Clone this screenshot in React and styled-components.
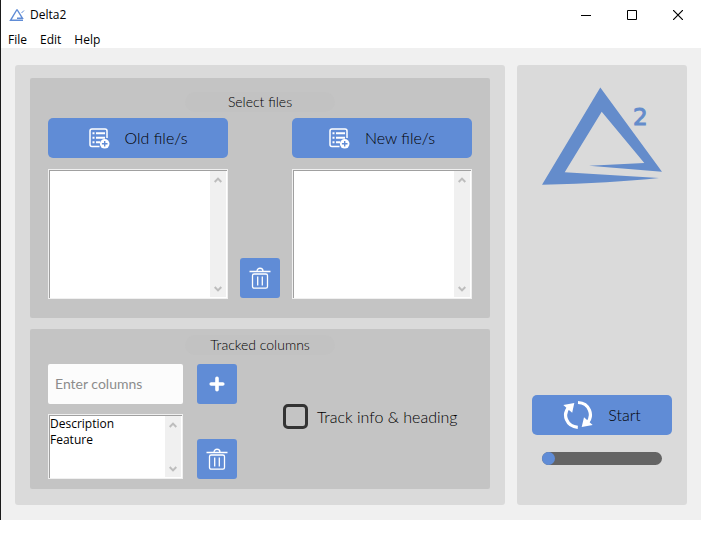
import React, { useState } from "react";
import styled, { createGlobalStyle } from "styled-components";

const blue = "#608cd6";
const gothic = '"Lato", sans-serif';
const system = '"Open Sans", "Noto Sans", sans-serif';

const GlobalStyle = createGlobalStyle`
  * { box-sizing: border-box; }
  body { margin: 0; background: #fff; color: #000; font: 12px/16px ${system}; }
  button { border: 0; padding: 0; color: inherit; cursor: pointer; }
  svg { display: block; flex: none; }
`;

const Window = styled.div`
  border-left: 1px solid #1a1a1a;
  background: #f0f0f0;
`;

const TitleBar = styled.header`
  display: flex;
  align-items: center;
  height: 30px;
  padding-left: 8px;
  background: #fff;
`;

const Title = styled.h1`
  flex: 1;
  margin: 0 0 0 4px;
  font: inherit;
`;

const WindowButton = styled.button`
  display: grid;
  place-items: center;
  width: 46px;
  height: 28px;
  background: none;
`;

const MenuBar = styled.nav`
  display: flex;
  gap: 13px;
  height: 18px;
  padding-left: 7px;
  background: #fff;
`;

const MenuItem = styled.button`
  height: 18px;
  background: none;
  font: 12px/20px ${system};
`;

const Content = styled.main`
  display: grid;
  grid-template-columns: minmax(0, 1fr) 170px;
  gap: 12px;
  padding: 17px 14px 15px;
`;

const Panel = styled.section`
  display: flex;
  flex-direction: column;
  gap: 11px;
  padding: 13px 15px 16px;
  border-radius: 3px;
  background: #dadada;
`;

const SidePanel = styled(Panel)`
  align-items: center;
  gap: 17px;
  padding: 6px 15px 40px;
`;

const Frame = styled.section`
  padding: ${(p) => (p.$compact ? "6px 18px 10px" : "14px 18px 19px")};
  border-radius: 2px;
  background: #c4c4c4;
`;

const Heading = styled.h2`
  width: 150px;
  margin: 0 auto;
  border-radius: 10px;
  background: #c2c2c2;
  font: 300 14px/20px ${gothic};
  text-align: center;
`;

const FileGrid = styled.div`
  display: grid;
  grid-template-columns: 180px 40px 180px;
  justify-content: center;
  gap: 11px 12px;
  margin-top: 6px;
`;

const ColumnGrid = styled.div`
  display: grid;
  grid-template-columns: 135px 40px minmax(0, 1fr);
  gap: 10px 14px;
  margin-top: 9px;
`;

const ActionButton = styled.button`
  display: flex;
  align-items: center;
  justify-content: center;
  gap: 15px;
  width: ${(p) => p.$width || "100%"};
  height: 40px;
  border-radius: 5px;
  background: ${blue};
  font: 300 16px/20px ${gothic};
`;

const IconButton = styled.button`
  display: grid;
  place-items: center;
  align-self: end;
  width: 40px;
  height: 40px;
  border-radius: 3px;
  background: ${blue};
`;

const FileTrash = styled(IconButton)`
  grid-column: 2;
  margin-bottom: 1px;
`;

const ListFrame = styled.div`
  display: flex;
  height: ${(p) => p.$height};
  border: 1px solid #f0f0f0;
  background: #fff;
  box-shadow: inset 1px 1px #a0a0a0, inset -1px -1px #fff;
`;

const List = styled.ul`
  flex: 1;
  margin: 0;
  padding: 1px;
  list-style: none;
`;

const ScrollTrack = styled.div`
  display: flex;
  flex-direction: column;
  justify-content: space-between;
  width: 16px;
  margin: 1px 1px 1px 0;
  background: #f0f0f0;
`;

const ScrollButton = styled.button`
  display: grid;
  place-items: center;
  height: 17px;
  background: none;
`;

const Entry = styled.input`
  width: 100%;
  height: 40px;
  padding: 0 7px 2px;
  border: 0;
  border-radius: 2px;
  background: #fcfcfc;
  font: 14px/20px ${gothic};
  &::placeholder { color: #8c8c8c; opacity: 1; }
`;

const CheckLabel = styled.label`
  display: flex;
  grid-area: 1 / 3 / span 2;
  align-items: center;
  align-self: center;
  gap: 9px;
  margin: 0 0 10px 32px;
  font: 300 16px/20px ${gothic};
  white-space: nowrap;
`;

const CheckBox = styled.input`
  appearance: none;
  width: 25px;
  height: 25px;
  margin: 0;
  border: 3px solid #333;
  border-radius: 5px;
  &:checked { background: ${blue}; }
`;

const Spacer = styled.div`
  flex: 1;
`;

const Track = styled.div`
  width: 120px;
  height: 13px;
  border-radius: 7px;
  background: #646464;
`;

const Fill = styled.div`
  height: 13px;
  min-width: 13px;
  border-radius: 7px;
  background: ${blue};
`;

const AppIcon = () => (
  <svg width="17" height="14" viewBox="0 0 17 14" fill="none" stroke={blue} strokeWidth="1.4">
    <path d="M8 1.5 1.5 12.3H14M8 1.5l5.5 8.8H8" />
    <path d="m12.5 5 2.5-2.5" strokeWidth="1" />
  </svg>
);

const Logo = () => (
  <svg width="120" height="120" viewBox="0 0 120 120" fill="#648ccb" role="img" aria-label="Delta 2">
    <path d="M58.3 16.5 120 100.7 47 94.7 102.3 92 59.7 40.7 22.7 101.3 117 107 Q70 112 0 113.7Z" />
    <text x="91" y="54" fontFamily="DejaVu Sans" fontSize="23" stroke="#648ccb" strokeWidth="1">2</text>
  </svg>
);

const FormIcon = () => (
  <svg width="21" height="21" viewBox="0 0 21 21" fill="none" stroke="#fff">
    <path d="M10.5 18.5H3A2 2 0 0 1 1 16.5V3A2 2 0 0 1 3 1h13a2 2 0 0 1 2 2v7" strokeWidth="1.5" />
    <path d="M3.5 5.2h2M7 5.2h9M3.5 9.7h2M7 9.7h9M3.5 14.2h2M7 14.2h4" strokeWidth="2" />
    <circle cx="15.7" cy="15.8" r="4.8" fill="#fff" stroke="none" />
    <path d="M15.7 13v5.6M12.9 15.8h5.6" stroke={blue} strokeWidth="1.4" />
  </svg>
);

const TrashIcon = () => (
  <svg width="22" height="22" viewBox="0 0 22 22" fill="none" stroke="#fff" strokeWidth="1.3">
    <path d="M.5 4.5h21M8 4.3C8 .2 14 .2 14 4.3" />
    <rect x="3.5" y="7" width="15" height="14.2" rx="1.6" />
    <path d="M8.7 9.5v9M13.3 9.5v9" />
  </svg>
);

const PlusIcon = () => (
  <svg width="16" height="16" viewBox="0 0 16 16" stroke="#fff" strokeWidth="3.6" strokeLinecap="round">
    <path d="M8 2.2v11.6M2.2 8h11.6" />
  </svg>
);

const CycleIcon = () => (
  <svg width="30" height="30" viewBox="0 0 30 30" fill="none" stroke="#fff" strokeWidth="3.2">
    <path d="M14.8 27.3C3.5 26.5-1 14.5 6 7" />
    <path d="M15 2.5C26.5 3 31 15.5 24 23" />
    <path d="M.3 5 11.3 3 9.2 12.8 6.5 10.5ZM29.7 25 18.7 27 21 17.2 23.5 19.5Z" fill="#fff" stroke="none" />
  </svg>
);

const Chevron = ({ down }) => (
  <svg width="8" height="6" viewBox="0 0 8 6" fill="none" stroke="#bdbdbd" strokeWidth="2">
    <path d={down ? "m.7 1 3.3 3.4L7.3 1" : "M.7 5 4 1.6 7.3 5"} />
  </svg>
);

function ListBox({ label, items = [], height }) {
  return (
    <ListFrame $height={height}>
      <List aria-label={label}>
        {items.map((item) => <li key={item}>{item}</li>)}
      </List>
      <ScrollTrack>
        <ScrollButton aria-label="Scroll up"><Chevron /></ScrollButton>
        <ScrollButton aria-label="Scroll down"><Chevron down /></ScrollButton>
      </ScrollTrack>
    </ListFrame>
  );
}

export default function App() {
  const [columns, setColumns] = useState(["Description", "Feature"]);
  const [entry, setEntry] = useState("");
  const progress = 0;

  const addColumn = () => {
    const name = entry.trim();
    if (name && !columns.includes(name)) setColumns([...columns, name]);
    setEntry("");
  };

  return (
    <>
      <GlobalStyle />
      <Window>
        <TitleBar>
          <AppIcon />
          <Title>Delta2</Title>
          <WindowButton aria-label="Minimize">
            <svg width="10" height="10" stroke="#000"><path d="M0 5.5h10" /></svg>
          </WindowButton>
          <WindowButton aria-label="Maximize">
            <svg width="10" height="10" stroke="#000" fill="none"><path d="M.5.5h9v9h-9z" /></svg>
          </WindowButton>
          <WindowButton aria-label="Close">
            <svg width="10" height="10" stroke="#000" strokeWidth="1.2"><path d="m0 0 10 10M10 0 0 10" /></svg>
          </WindowButton>
        </TitleBar>
        <MenuBar>
          <MenuItem>File</MenuItem>
          <MenuItem>Edit</MenuItem>
          <MenuItem>Help</MenuItem>
        </MenuBar>
        <Content>
          <Panel>
            <Frame>
              <Heading>Select files</Heading>
              <FileGrid>
                <ActionButton><FormIcon />Old file/s</ActionButton>
                <span />
                <ActionButton><FormIcon />New file/s</ActionButton>
                <ListBox label="Old files" height="130px" />
                <FileTrash aria-label="Clear files"><TrashIcon /></FileTrash>
                <ListBox label="New files" height="130px" />
              </FileGrid>
            </Frame>
            <Frame $compact>
              <Heading>Tracked columns</Heading>
              <ColumnGrid>
                <Entry
                  aria-label="Enter columns"
                  placeholder="Enter columns"
                  value={entry}
                  onChange={(e) => setEntry(e.target.value)}
                />
                <IconButton aria-label="Add column" onClick={addColumn}><PlusIcon /></IconButton>
                <CheckLabel>
                  <CheckBox type="checkbox" />
                  Track info &amp; heading
                </CheckLabel>
                <ListBox label="Tracked columns" items={columns} height="65px" />
                <IconButton aria-label="Clear columns" onClick={() => setColumns([])}><TrashIcon /></IconButton>
              </ColumnGrid>
            </Frame>
          </Panel>
          <SidePanel>
            <Logo />
            <Spacer />
            <ActionButton $width="140px"><CycleIcon />Start</ActionButton>
            <Track role="progressbar" aria-label="Progress" aria-valuenow={progress}>
              <Fill style={{ width: `${progress}%` }} />
            </Track>
          </SidePanel>
        </Content>
      </Window>
    </>
  );
}
